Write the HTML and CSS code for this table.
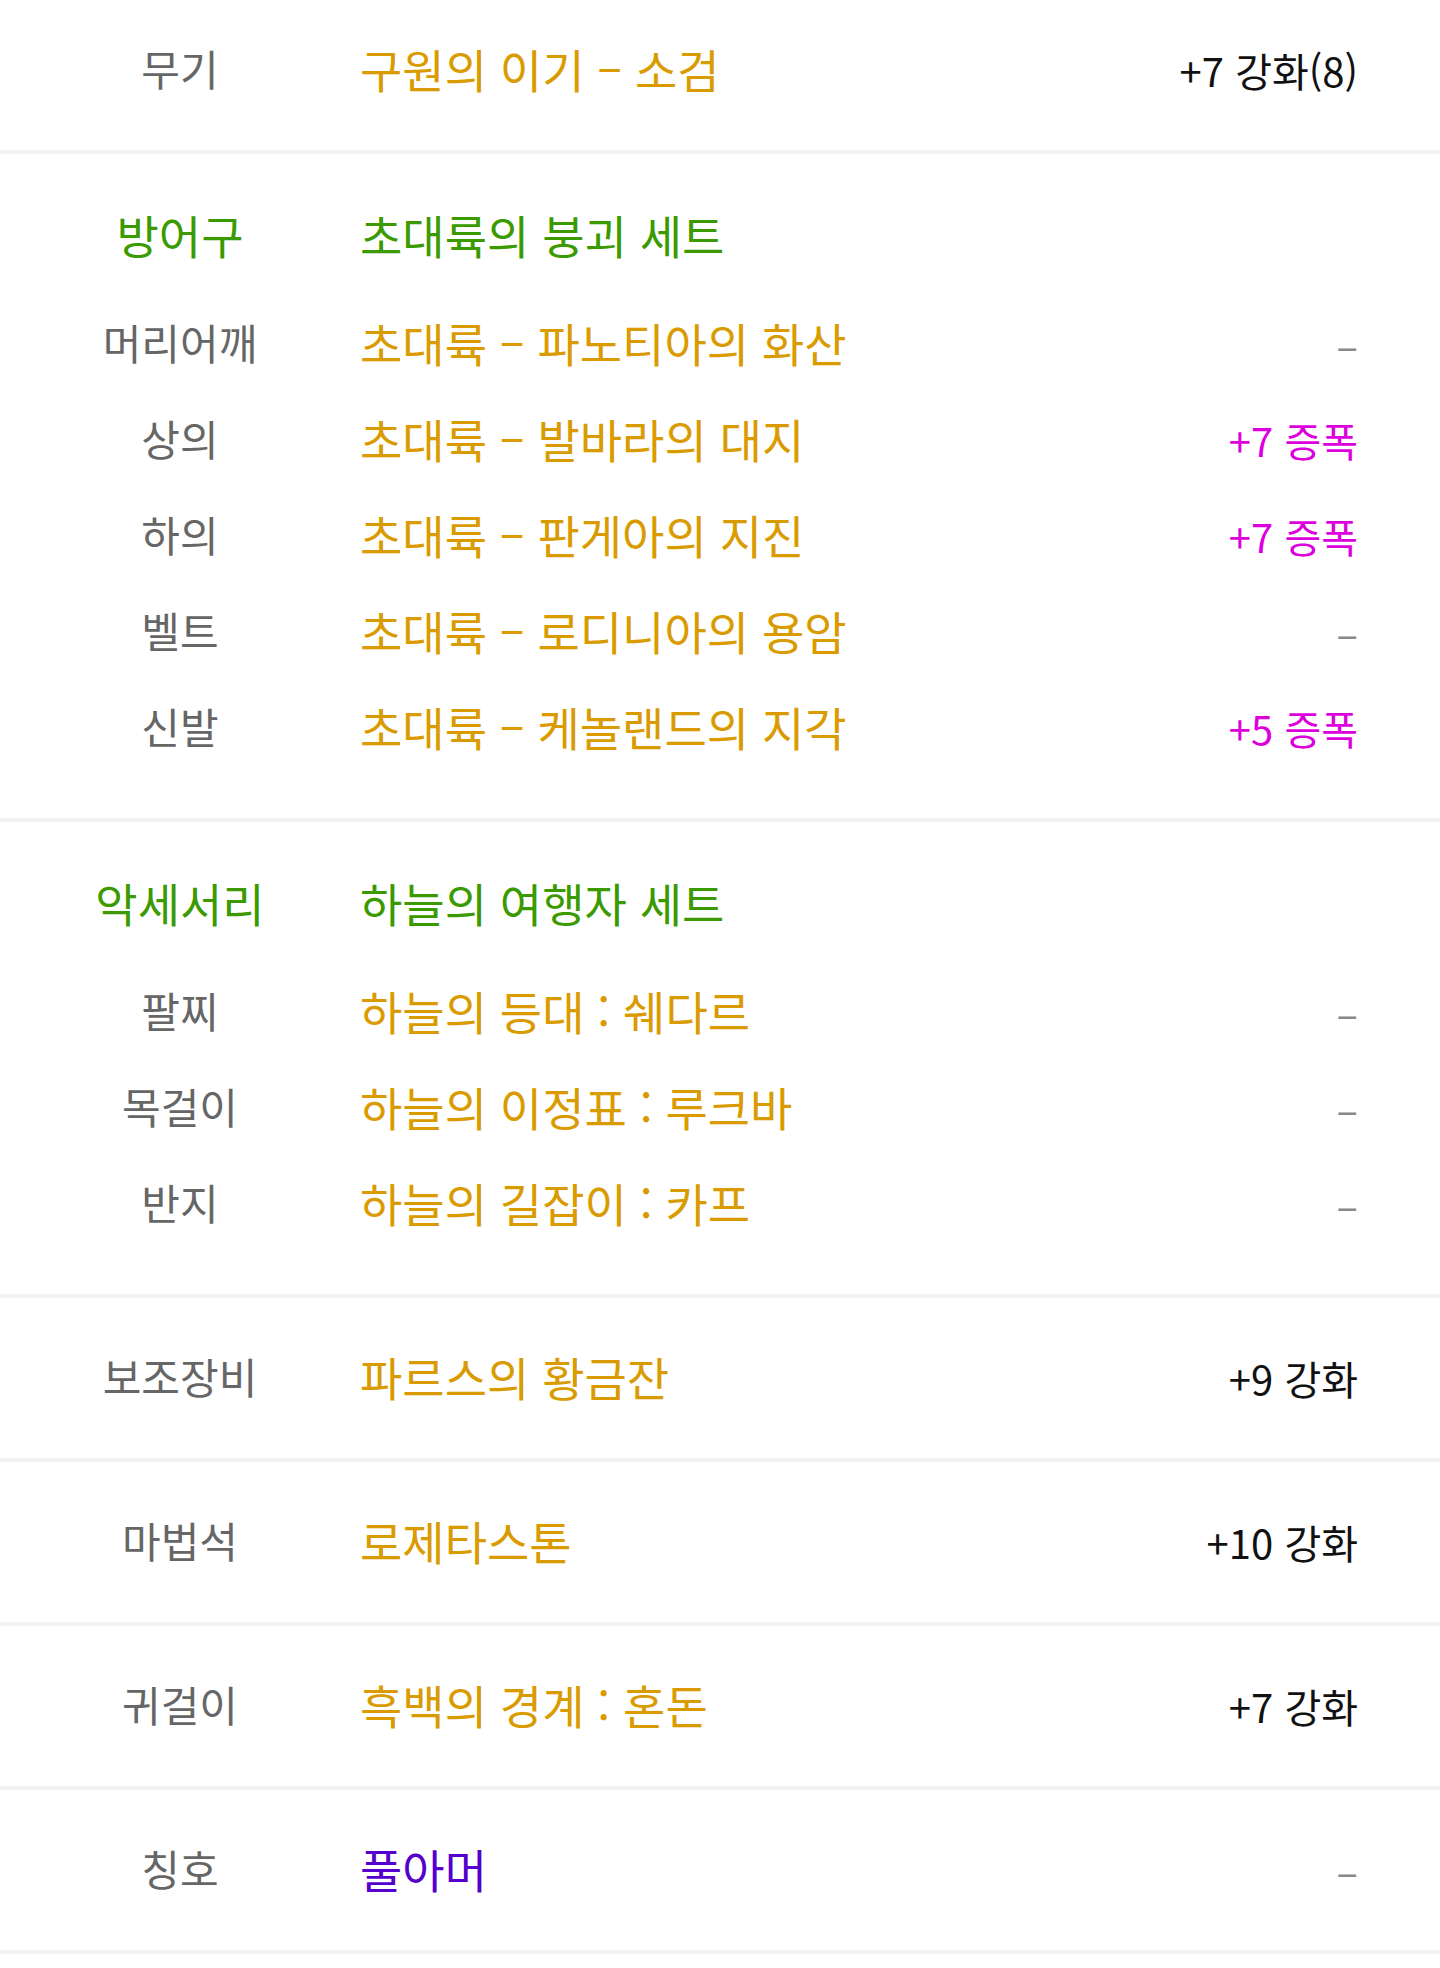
FILE: index.html
```html
<!DOCTYPE html>
<html lang="ko">
<head>
<meta charset="utf-8">
<link rel="stylesheet" href="styles.css">
</head>
<body>
<div class="list">
  <section class="sec single first">
    <div class="row"><div class="label">무기</div><div class="name gold">구원의 이기 – 소검</div><div class="val black">+7 강화(8)</div></div>
  </section>
  <section class="sec group">
    <div class="row head"><div class="label green">방어구</div><div class="name green">초대륙의 붕괴 세트</div><div class="val"></div></div>
    <div class="row"><div class="label">머리어깨</div><div class="name gold">초대륙 – 파노티아의 화산</div><div class="val dash">–</div></div>
    <div class="row"><div class="label">상의</div><div class="name gold">초대륙 – 발바라의 대지</div><div class="val pink">+7 증폭</div></div>
    <div class="row"><div class="label">하의</div><div class="name gold">초대륙 – 판게아의 지진</div><div class="val pink">+7 증폭</div></div>
    <div class="row"><div class="label">벨트</div><div class="name gold">초대륙 – 로디니아의 용암</div><div class="val dash">–</div></div>
    <div class="row"><div class="label">신발</div><div class="name gold">초대륙 – 케놀랜드의 지각</div><div class="val pink">+5 증폭</div></div>
  </section>
  <section class="sec group">
    <div class="row head"><div class="label green">악세서리</div><div class="name green">하늘의 여행자 세트</div><div class="val"></div></div>
    <div class="row"><div class="label">팔찌</div><div class="name gold">하늘의 등대 : 쉐다르</div><div class="val dash">–</div></div>
    <div class="row"><div class="label">목걸이</div><div class="name gold">하늘의 이정표 : 루크바</div><div class="val dash">–</div></div>
    <div class="row"><div class="label">반지</div><div class="name gold">하늘의 길잡이 : 카프</div><div class="val dash">–</div></div>
  </section>
  <section class="sec single">
    <div class="row"><div class="label">보조장비</div><div class="name gold">파르스의 황금잔</div><div class="val black">+9 강화</div></div>
  </section>
  <section class="sec single">
    <div class="row"><div class="label">마법석</div><div class="name gold">로제타스톤</div><div class="val black">+10 강화</div></div>
  </section>
  <section class="sec single">
    <div class="row"><div class="label">귀걸이</div><div class="name gold">흑백의 경계 : 혼돈</div><div class="val black">+7 강화</div></div>
  </section>
  <section class="sec single">
    <div class="row"><div class="label">칭호</div><div class="name purple">풀아머</div><div class="val dash">–</div></div>
  </section>
</div>
</body>
</html>
```

FILE: styles.css
```css
html, body {
  margin: 0;
  padding: 0;
  background: #ffffff;
}
body {
  font-family: "Noto Sans CJK KR", "Noto Sans", sans-serif;
  overflow: hidden;
}
.list {
  margin-top: -10px;
}
.sec {
  border-bottom: 4px solid #f2f2f2;
}
.single {
  padding: 32px 0;
}
.group {
  padding: 34px 0 42px;
}
.group .head {
  margin-bottom: 12px;
}
.row {
  height: 96px;
  display: flex;
  align-items: center;
  padding-right: 82px;
}
.label {
  width: 360px;
  flex: none;
  text-align: center;
  color: #666666;
  font-size: 42px;
  line-height: 1;
  white-space: nowrap;
  padding-bottom: 4px;
}
.label.green {
  font-size: 46px;
}
.name {
  flex: 1;
  font-size: 46px;
  line-height: 1;
  white-space: nowrap;
  padding-bottom: 4px;
}
.val {
  flex: none;
  font-size: 40px;
  line-height: 1;
  text-align: right;
  white-space: nowrap;
}
.gold { color: #d99b00; }
.green { color: #3a9a00; }
.purple { color: #5500cc; }
.pink { color: #dd00dd; }
.black { color: #111111; }
.dash { color: #888888; }
.label.green { color: #3a9a00; }
```
